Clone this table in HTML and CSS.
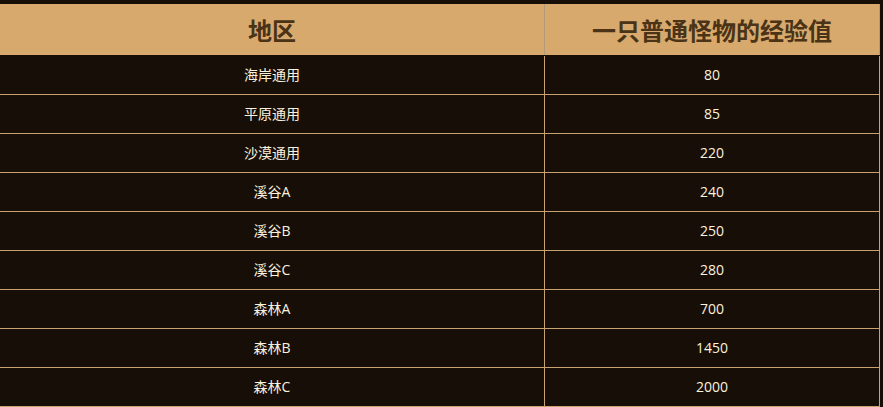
FILE: index.html
```html
<!DOCTYPE html>
<html lang="zh">
<head>
<meta charset="utf-8">
<link rel="stylesheet" href="styles.css">
</head>
<body>
<table class="exp">
  <thead>
    <tr><th class="c1">地区</th><th class="c2">一只普通怪物的经验值</th></tr>
  </thead>
  <tbody>
    <tr><td class="c1">海岸通用</td><td class="c2">80</td></tr>
    <tr><td class="c1">平原通用</td><td class="c2">85</td></tr>
    <tr><td class="c1">沙漠通用</td><td class="c2">220</td></tr>
    <tr><td class="c1">溪谷A</td><td class="c2">240</td></tr>
    <tr><td class="c1">溪谷B</td><td class="c2">250</td></tr>
    <tr><td class="c1">溪谷C</td><td class="c2">280</td></tr>
    <tr><td class="c1">森林A</td><td class="c2">700</td></tr>
    <tr><td class="c1">森林B</td><td class="c2">1450</td></tr>
    <tr><td class="c1">森林C</td><td class="c2">2000</td></tr>
  </tbody>
</table>
</body>
</html>
```
FILE: styles.css
```css
html, body {
  margin: 0;
  padding: 0;
  background: #170e07;
}
body {
  padding-top: 4px;
  font-family: "Noto Sans CJK SC", "Noto Sans", sans-serif;
}
.exp {
  border-collapse: collapse;
  table-layout: fixed;
  width: 880px;
}
.exp .c1 { width: 544px; }
.exp th {
  background: #d8a96d;
  color: #4a3316;
  font-size: 24px;
  font-weight: 700;
  height: 51px;
  padding: 0;
  text-align: center;
  border-bottom: 1px solid #170e07;
  line-height: 51px;
}
.exp th.c1 { border-right: 1px solid #b29a7a; }
.exp th.c2 { border-right: 1px solid #b29a7a; }
.exp td {
  color: #fbf1dd;
  font-family: "Open Sans", "Noto Sans CJK SC", sans-serif;
  font-size: 14px;
  height: 38px;
  padding: 0;
  text-align: center;
  border-bottom: 1px solid #c9a271;
  line-height: 38px;
}
.exp td.c1 { border-right: 1px solid #c9a271; }
.exp td.c2 { border-right: 1px solid #c9a271; }
```
